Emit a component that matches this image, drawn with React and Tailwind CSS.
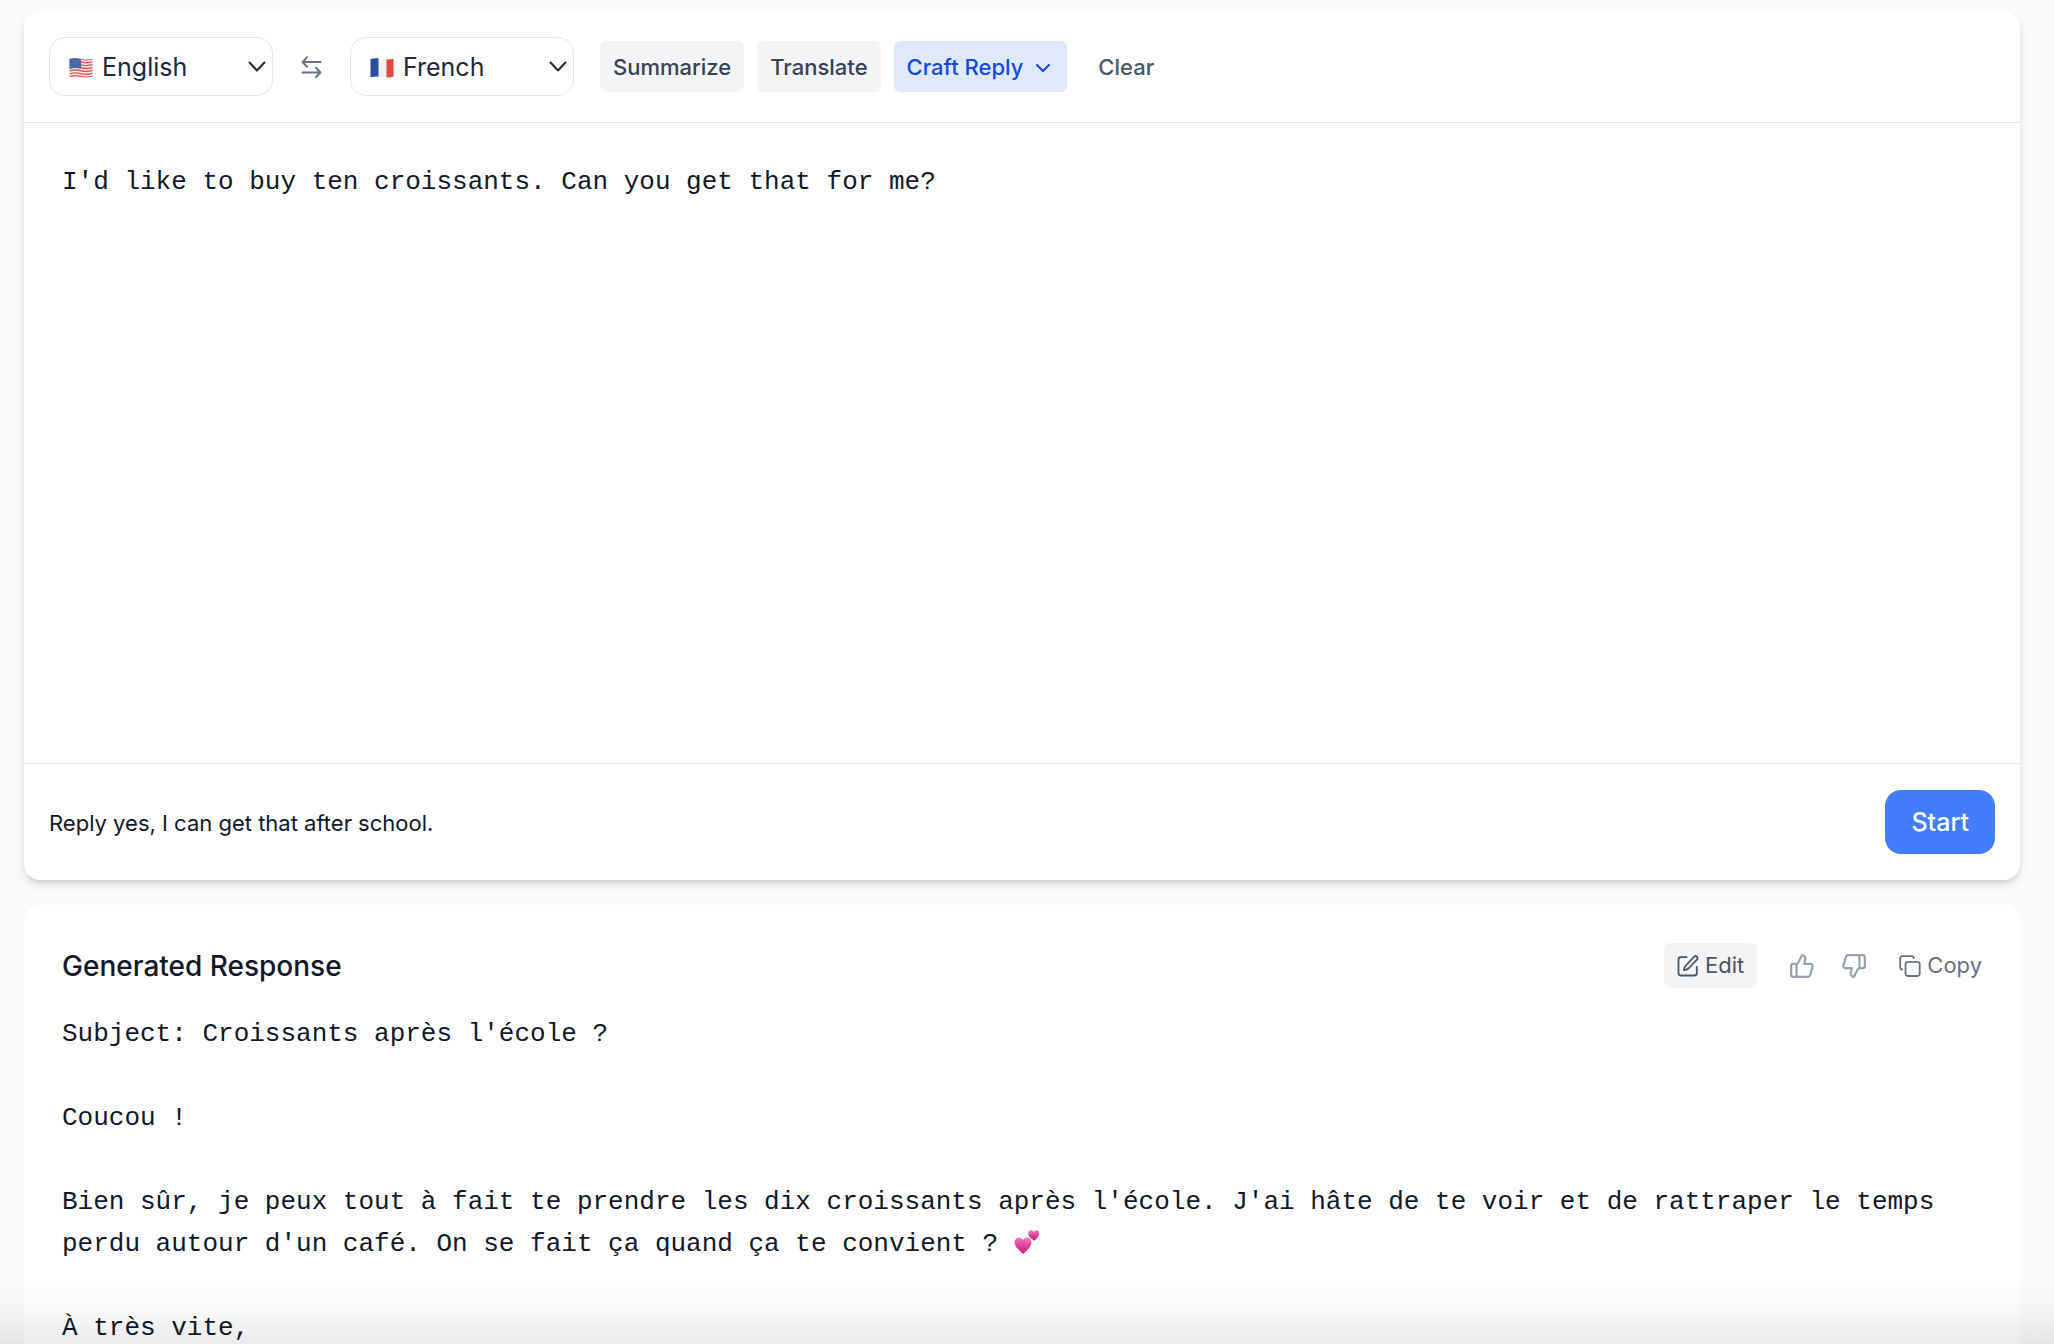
import { useState } from 'react';
import { ThumbsUp, ThumbsDown, ChevronDown } from 'lucide-react';

const INITIAL_RESPONSE = `Subject: Croissants après l'école ?

Coucou !

Bien sûr, je peux tout à fait te prendre les dix croissants après l'école. J'ai hâte de te voir et de rattraper le temps perdu autour d'un café. On se fait ça quand ça te convient ? `;

function UsFlag() {
    return (
        <svg viewBox="0 0 24 20" className="w-6 h-5" aria-hidden="true">
            <clipPath id="us-wave">
                <path d="M.5 1C5-.4 9 .6 12 1s7.500.900 11.500-.3v17.800c-4 1.400-7 .9-10.500.4S5 17.900.5 19.300z" />
            </clipPath>
            <g clipPath="url(#us-wave)">
                <path fill="#f4eeee" d="M0 0h24v20H0z" />
                <path
                    stroke="#d65a56"
                    strokeWidth="1.45"
                    fill="none"
                    d="M0 1.500q6-2 12-.4t12-.4M0 4.400q6-2 12-.4t12-.4M0 7.300q6-2 12-.4t12-.4M0 10.200q6-2 12-.4t12-.4M0 13.100q6-2 12-.4t12-.4M0 16q6-2 12-.4t12-.4M0 18.900q6-2 12-.4t12-.4"
                />
                <path fill="#4569a5" d="M0 0h12v10.500Q6 9 0 11.200z" />
            </g>
        </svg>
    );
}

function FrFlag() {
    return (
        <svg viewBox="0 0 24 20" className="w-6 h-5" aria-hidden="true">
            <clipPath id="fr-wave">
                <path d="M.5 1C5-.4 9 .6 12 1s7.500.900 11.500-.3v17.800c-4 1.400-7 .9-10.500.4S5 17.900.5 19.300z" />
            </clipPath>
            <g clipPath="url(#fr-wave)">
                <path fill="#f1f1f1" d="M0 0h24v20H0z" />
                <path fill="#25529a" d="M0 0h8.500v20H0z" />
                <path fill="#dc4b3e" d="M16.500 0H24v20h-7.500z" />
            </g>
        </svg>
    );
}

function Hearts() {
    return (
        <svg viewBox="0 0 26 26" className="inline-block w-[26px] h-[26px] align-[-4px]" role="img" aria-label="two hearts">
            <defs>
                <linearGradient id="heart" x1="0" y1="0" x2="0" y2="1">
                    <stop offset="0" stopColor="#ee7cc0" />
                    <stop offset=".5" stopColor="#dc3fa0" />
                    <stop offset="1" stopColor="#c1265f" />
                </linearGradient>
            </defs>
            <path fill="url(#heart)" d="M9 25C6 22 .6 18 .6 13.400c0-5.600 6.800-6.500 8.400-2.200 1.600-4.300 8.400-3.400 8.400 2.200C17.400 18 12 22 9 25z" />
            <path fill="url(#heart)" d="M20.500 11.800c-2.300-1.600-6.100-3.900-6.300-7.100-.2-3.900 4.400-4.500 5.500-1.400 1.100-3.200 5.800-2.600 5.600 1.100-.2 2.900-2.800 5.200-4.800 7.400z" />
        </svg>
    );
}

function SwapIcon() {
    return (
        <svg viewBox="0 0 21 22" className="w-[21px] h-[22px]" fill="none" stroke="currentColor" strokeWidth="2" strokeLinecap="round" strokeLinejoin="round">
            <path d="M19.500 6.100H1.800M6 1.200 1.600 6.100 6 10.800M1.500 16.500h17.700M15 11.800l4.400 4.700-4.400 4.500" />
        </svg>
    );
}

function EditIcon() {
    return (
        <svg viewBox="0 0 22 22" className="w-[22px] h-[22px]" fill="none" stroke="currentColor" strokeWidth="1.8" strokeLinecap="round" strokeLinejoin="round">
            <path d="M9.500 2.200H4A2.500 2.500 0 0 0 1.500 4.700v13.300A2.500 2.500 0 0 0 4 20.500h13.300a2.500 2.500 0 0 0 2.500-2.500v-6" />
            <path d="M17 1.800a1.900 1.900 0 0 1 2.900 2.800L11.500 13.500q-1.700 1.500-4.600 1.700.3-2.900 1.900-4.700z" />
        </svg>
    );
}

function CopyIcon() {
    return (
        <svg viewBox="0 0 22 22" className="w-[22px] h-[22px]" fill="none" stroke="currentColor" strokeWidth="1.8" strokeLinecap="round" strokeLinejoin="round">
            <rect x="6.500" y="6.800" width="14.200" height="14.200" rx="2.400" />
            <path d="M3.200 14.500A2 2 0 0 1 1.200 12.500V3.200A2 2 0 0 1 3.200 1.200h9.500a2 2 0 0 1 2 2" />
        </svg>
    );
}

function LanguageSelect({ label, value, onChange, flag }) {
    return (
        <div className="relative w-56">
            <select
                aria-label={label}
                value={value}
                onChange={(e) => onChange(e.target.value)}
                className="appearance-none block w-full h-[59px] pl-[52px] pr-10 pt-[3px] rounded-2xl border border-gray-200 bg-white text-[25px] text-gray-800"
            >
                <option>English</option>
                <option>French</option>
            </select>
            <span className="absolute left-5 top-[21px] pointer-events-none">{flag}</span>
            <svg viewBox="0 0 18 12" className="absolute right-[7px] top-6 w-[18px] h-3 text-gray-800 pointer-events-none" fill="none" stroke="currentColor" strokeWidth="2" strokeLinecap="round" strokeLinejoin="round">
                <path d="m1.500 1.500 7.500 8 7.500-8" />
            </svg>
        </div>
    );
}

export default function App() {
    const [source, setSource] = useState('English');
    const [target, setTarget] = useState('French');
    const [text, setText] = useState("I'd like to buy ten croissants. Can you get that for me?");
    const [instruction, setInstruction] = useState('Reply yes, I can get that after school.');

    const swap = () => {
        setSource(target);
        setTarget(source);
    };

    const flagFor = (language) => (language === 'English' ? <UsFlag /> : <FrFlag />);

    return (
        <div className="relative h-screen overflow-hidden bg-[#f9fafc] pt-[11px] pl-6 pr-[34px] font-['Inter',sans-serif] text-gray-900">
            <section className="rounded-2xl bg-white shadow-[0_5px_10px_-1px_rgba(0,0,0,0.12),0_3px_5px_-2px_rgba(0,0,0,0.12)]">
                <div className="flex items-center px-[25px] py-[26px] border-b border-gray-200">
                    <LanguageSelect label="Source language" value={source} onChange={setSource} flag={flagFor(source)} />
                    <button onClick={swap} aria-label="Swap languages" className="mx-7 text-gray-500">
                        <SwapIcon />
                    </button>
                    <LanguageSelect label="Target language" value={target} onChange={setTarget} flag={flagFor(target)} />
                    <div className="flex items-center gap-[13px] ml-[26px] text-[22px] font-medium">
                        <button className="h-[51px] px-[13px] pt-0.5 rounded-md bg-gray-100 text-gray-700">Summarize</button>
                        <button className="h-[51px] px-[13px] pt-0.5 rounded-md bg-gray-100 text-gray-700">Translate</button>
                        <button className="flex items-center gap-2 h-[51px] pl-[13px] pr-3 pt-0.5 rounded-md bg-[#dfe9fb] text-blue-700">
                            Craft Reply
                            <ChevronDown size={24} />
                        </button>
                        <button className="h-[51px] px-[18px] pt-0.5 text-gray-600" onClick={() => setText('')}>Clear</button>
                    </div>
                </div>
                <textarea
                    aria-label="Text"
                    value={text}
                    onChange={(e) => setText(e.target.value)}
                    className="block w-full h-[640px] px-[38px] py-[38px] resize-none outline-none font-['Liberation_Mono',monospace] text-[26px] leading-[42px]"
                />
                <div className="flex items-center gap-6 px-[25px] py-[26px] border-t border-gray-200">
                    <input
                        aria-label="Instruction"
                        value={instruction}
                        onChange={(e) => setInstruction(e.target.value)}
                        className="flex-1 pt-0.5 outline-none text-[22px]"
                    />
                    <button className="h-16 px-[26px] pt-0.5 rounded-2xl bg-[#437dfc] text-white text-[25px] font-medium">Start</button>
                </div>
            </section>

            <section className="mt-[25px] px-[38px] pt-[38px] pb-10 rounded-2xl bg-white">
                <div className="flex items-center justify-between">
                    <h2 className="text-[28px] font-medium">Generated Response</h2>
                    <div className="flex items-center text-[22px]">
                        <button className="flex items-center gap-1.5 h-[45px] px-[13px] rounded-md bg-gray-100 text-gray-600">
                            <EditIcon />
                            Edit
                        </button>
                        <button aria-label="Good response" className="ml-8 text-gray-400">
                            <ThumbsUp size={26} strokeWidth={2} />
                        </button>
                        <button aria-label="Bad response" className="ml-[26px] text-gray-400">
                            <ThumbsDown size={26} strokeWidth={2} />
                        </button>
                        <button className="flex items-center gap-1.5 ml-8 text-gray-500">
                            <CopyIcon />
                            Copy
                        </button>
                    </div>
                </div>
                <div className="mt-[25px] whitespace-pre-wrap font-['Liberation_Mono',monospace] text-[26px] leading-[42px]">
                    {INITIAL_RESPONSE}
                    <Hearts />
                    {'\n\nÀ très vite,'}
                </div>
            </section>

            <div className="absolute inset-x-0 bottom-0 h-16 bg-linear-to-t from-black/8 via-black/3 to-transparent pointer-events-none" />
        </div>
    );
}
